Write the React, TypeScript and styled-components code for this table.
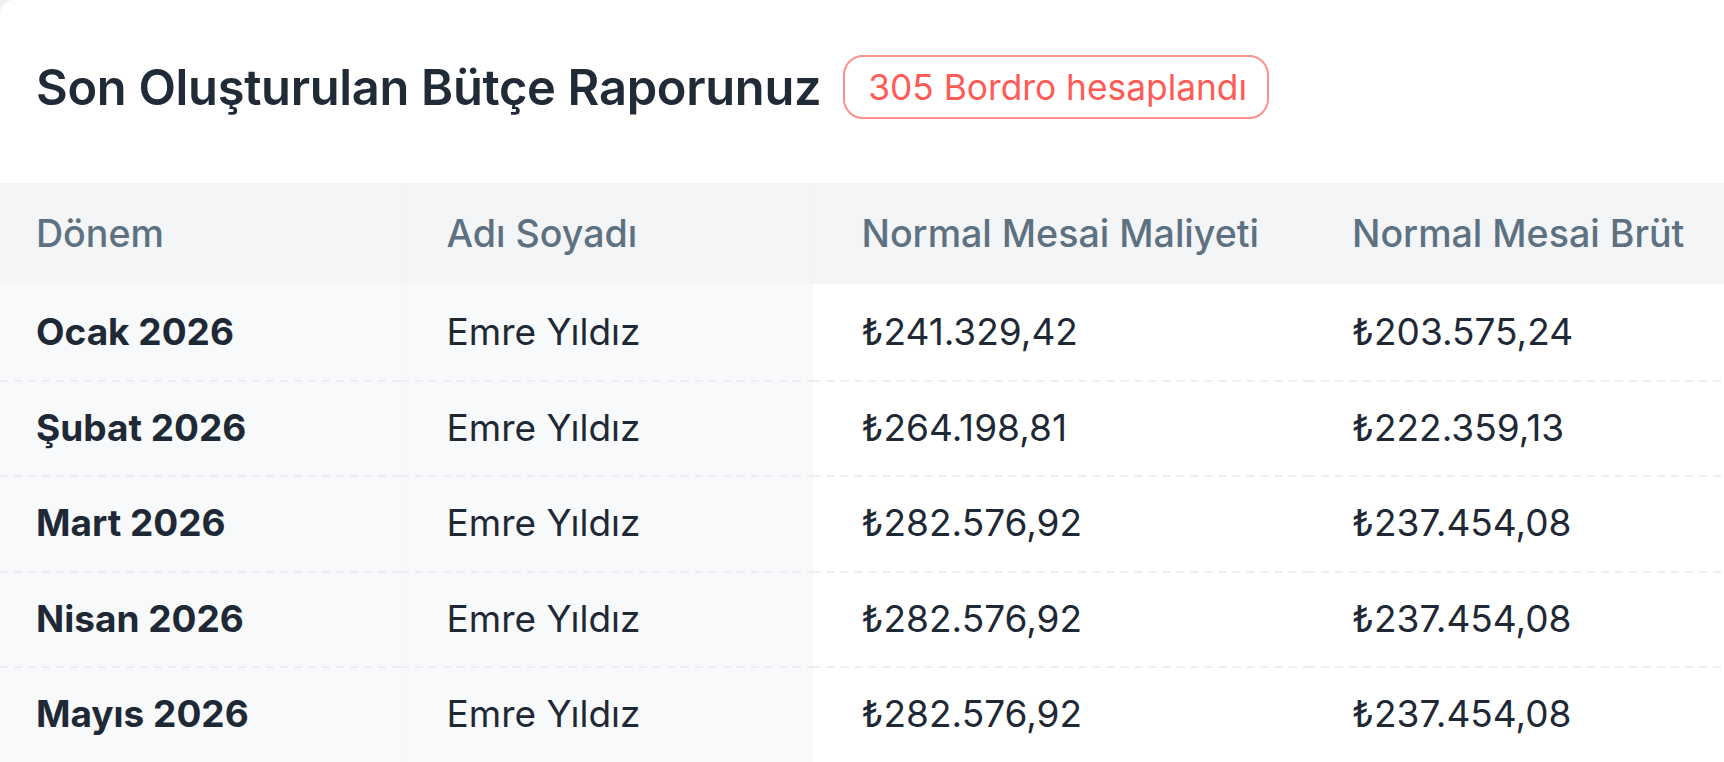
import React from "react";
import styled, { createGlobalStyle } from "styled-components";

const GlobalStyle = createGlobalStyle`
  html, body {
    margin: 0;
    padding: 0;
    background: #eef0f3;
    overflow: hidden;
  }
  body {
    font-family: Inter, "Noto Sans", "Liberation Sans", sans-serif;
  }
`;

const Card = styled.div`
  width: 1724px;
  height: 762px;
  background: #ffffff;
  border-top-left-radius: 14px;
  overflow: hidden;
`;

const TitleRow = styled.div`
  display: flex;
  align-items: center;
  gap: 22px;
  padding: 55px 36px 64px;
`;

const Title = styled.h2`
  margin: 0;
  font-size: 48.8px;
  font-weight: 600;
  color: #212b37;
  letter-spacing: -0.3px;
`;

const Badge = styled.span`
  display: inline-flex;
  align-items: center;
  height: 64px;
  box-sizing: border-box;
  padding: 0 20px 0 23px;
  border: 2px solid #ff8f8b;
  border-radius: 20px;
  color: #ff5b56;
  font-size: 35.3px;
  font-weight: 400;
`;

const Table = styled.table`
  border-collapse: collapse;
  table-layout: fixed;
  width: 1802px;
`;

const Th = styled.th<{ $w: number; $pl: number; $edge?: boolean }>`
  width: ${(p) => p.$w}px;
  height: 101px;
  padding: 0 0 0 ${(p) => p.$pl}px;
  box-sizing: border-box;
  background: #f3f5f7;
  text-align: left;
  font-size: 37.6px;
  font-weight: 500;
  color: #5e7181;
  white-space: nowrap;
  border-right: ${(p) => (p.$edge ? "1px solid #f2f1f4" : "none")};
`;

const Tr = styled.tr`
  & + & td {
    background-image: linear-gradient(to right, #eceef1 8px, transparent 8px);
    background-size: 14px 2px;
    background-repeat: repeat-x;
    background-position: 0 0;
  }
`;

const Td = styled.td<{ $pl: number; $sticky?: boolean; $bold?: boolean }>`
  height: 95.5px;
  padding: 0 0 0 ${(p) => p.$pl}px;
  box-sizing: border-box;
  background-color: ${(p) => (p.$sticky ? "#f8f9fb" : "#ffffff")};
  border-right: ${(p) => (p.$sticky ? "1px solid #f6f7f9" : "none")};
  font-size: 37px;
  font-weight: ${(p) => (p.$bold ? 700 : 400)};
  color: #1f2935;
  white-space: nowrap;
`;

const rows = [
  { donem: "Ocak 2026", ad: "Emre Yıldız", maliyet: "₺241.329,42", brut: "₺203.575,24" },
  { donem: "Şubat 2026", ad: "Emre Yıldız", maliyet: "₺264.198,81", brut: "₺222.359,13" },
  { donem: "Mart 2026", ad: "Emre Yıldız", maliyet: "₺282.576,92", brut: "₺237.454,08" },
  { donem: "Nisan 2026", ad: "Emre Yıldız", maliyet: "₺282.576,92", brut: "₺237.454,08" },
  { donem: "Mayıs 2026", ad: "Emre Yıldız", maliyet: "₺282.576,92", brut: "₺237.454,08" },
];

const App = () => {
  return (
    <>
      <GlobalStyle />
      <Card>
        <TitleRow>
          <Title>Son Oluşturulan Bütçe Raporunuz</Title>
          <Badge>305 Bordro hesaplandı</Badge>
        </TitleRow>
        <Table>
          <thead>
            <tr>
              <Th $w={400} $pl={36} $edge>Dönem</Th>
              <Th $w={412} $pl={46} $edge>Adı Soyadı</Th>
              <Th $w={495} $pl={49}>Normal Mesai Maliyeti</Th>
              <Th $w={495} $pl={45}>Normal Mesai Brüt</Th>
            </tr>
          </thead>
          <tbody>
            {rows.map((r, i) => (
              <Tr key={i}>
                <Td $pl={36} $sticky $bold>{r.donem}</Td>
                <Td $pl={46} $sticky>{r.ad}</Td>
                <Td $pl={49}>{r.maliyet}</Td>
                <Td $pl={45}>{r.brut}</Td>
              </Tr>
            ))}
          </tbody>
        </Table>
      </Card>
    </>
  );
};

export default App;
